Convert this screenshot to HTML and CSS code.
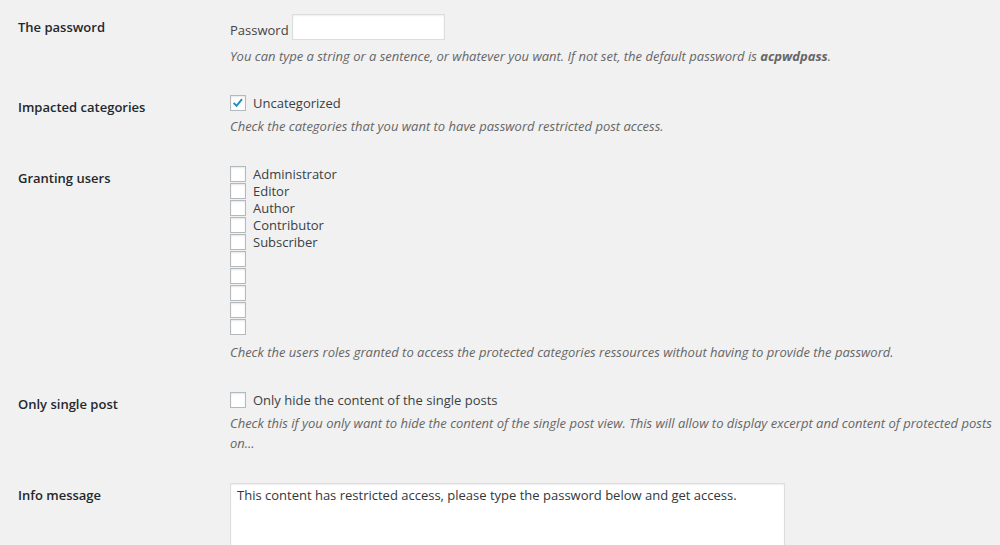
FILE: index.html
```html
<!DOCTYPE html>
<html lang="en">
<head>
<meta charset="utf-8">
<title>Settings</title>
<link rel="stylesheet" href="styles.css">
</head>
<body>
<div class="form">
  <div class="row first">
    <div class="th">The password</div>
    <div class="td">
      <div class="pw"><label class="pw-label">Password</label><span class="text-input"></span></div>
      <p class="description">You can type a string or a sentence, or whatever you want. If not set, the default password is <strong>acpwdpass</strong>.</p>
    </div>
  </div>
  <div class="row">
    <div class="th">Impacted categories</div>
    <div class="td">
      <div class="check"><span class="cb"><svg viewBox="0 0 16 16" width="14" height="14"><path d="M3 7.8 L6.3 11.2 L12.6 3.6" fill="none" stroke="#1e8cbe" stroke-width="2.2"/></svg></span><span>Uncategorized</span></div>
      <p class="description">Check the categories that you want to have password restricted post access.</p>
    </div>
  </div>
  <div class="row">
    <div class="th">Granting users</div>
    <div class="td">
      <div class="list">
        <div class="check"><span class="cb"></span><span>Administrator</span></div>
        <div class="check"><span class="cb"></span><span>Editor</span></div>
        <div class="check"><span class="cb"></span><span>Author</span></div>
        <div class="check"><span class="cb"></span><span>Contributor</span></div>
        <div class="check"><span class="cb"></span><span>Subscriber</span></div>
        <div class="check"><span class="cb"></span></div>
        <div class="check"><span class="cb"></span></div>
        <div class="check"><span class="cb"></span></div>
        <div class="check"><span class="cb"></span></div>
        <div class="check"><span class="cb"></span></div>
      </div>
      <p class="description">Check the users roles granted to access the protected categories ressources without having to provide the password.</p>
    </div>
  </div>
  <div class="row">
    <div class="th">Only single post</div>
    <div class="td">
      <div class="check"><span class="cb"></span><span>Only hide the content of the single posts</span></div>
      <p class="description">Check this if you only want to hide the content of the single post view. This will allow to display excerpt and content of protected posts on...</p>
    </div>
  </div>
  <div class="row">
    <div class="th">Info message</div>
    <div class="td">
      <div class="textarea">This content has restricted access, please type the password below and get access.</div>
    </div>
  </div>
</div>
</body>
</html>
```

FILE: styles.css
```css
html, body {
  margin: 0;
  overflow: hidden;
}
body {
  background: #f1f1f1;
  font-family: "Open Sans", "Noto Sans", sans-serif;
  font-size: 13px;
  color: #444;
}
.form {
  padding-left: 18px;
}
.row {
  display: grid;
  grid-template-columns: 212px 768px;
}
.th {
  padding-top: 19px;
  font-weight: 600;
  color: #23282d;
  line-height: 17px;
}
.td {
  padding: 15px 0;
}
.first .td {
  padding-top: 14px;
  padding-bottom: 14px;
}
.pw {
  display: flex;
  align-items: center;
  gap: 3px;
  height: 26px;
}
.pw-label {
  padding-top: 5px;
}
.text-input {
  width: 153px;
  height: 26px;
  box-sizing: border-box;
  border: 1px solid #ddd;
  background: #fff;
  box-shadow: inset 0 1px 2px rgba(0, 0, 0, 0.07);
}
.description {
  margin: 5px 0 0;
  line-height: 20px;
  font-style: italic;
  color: #666;
}
.first .description {
  margin-top: 6px;
}
.description strong {
  font-weight: 700;
}
.list {
  display: flex;
  flex-direction: column;
  gap: 1px;
  padding-bottom: 2px;
}
.check {
  display: flex;
  align-items: center;
  gap: 7px;
  height: 16px;
  line-height: 16px;
  color: #3a3f44;
}
.cb {
  display: flex;
  align-items: center;
  justify-content: center;
  width: 16px;
  height: 16px;
  box-sizing: border-box;
  border: 1px solid #b4b9be;
  background: #fff;
  box-shadow: inset 0 1px 2px rgba(0, 0, 0, 0.1);
}
.textarea {
  width: 555px;
  height: 120px;
  box-sizing: border-box;
  padding: 3px 6px;
  line-height: 17px;
  border: 1px solid #ddd;
  background: #fff;
  color: #32373c;
  box-shadow: inset 0 1px 2px rgba(0, 0, 0, 0.07);
}
```
